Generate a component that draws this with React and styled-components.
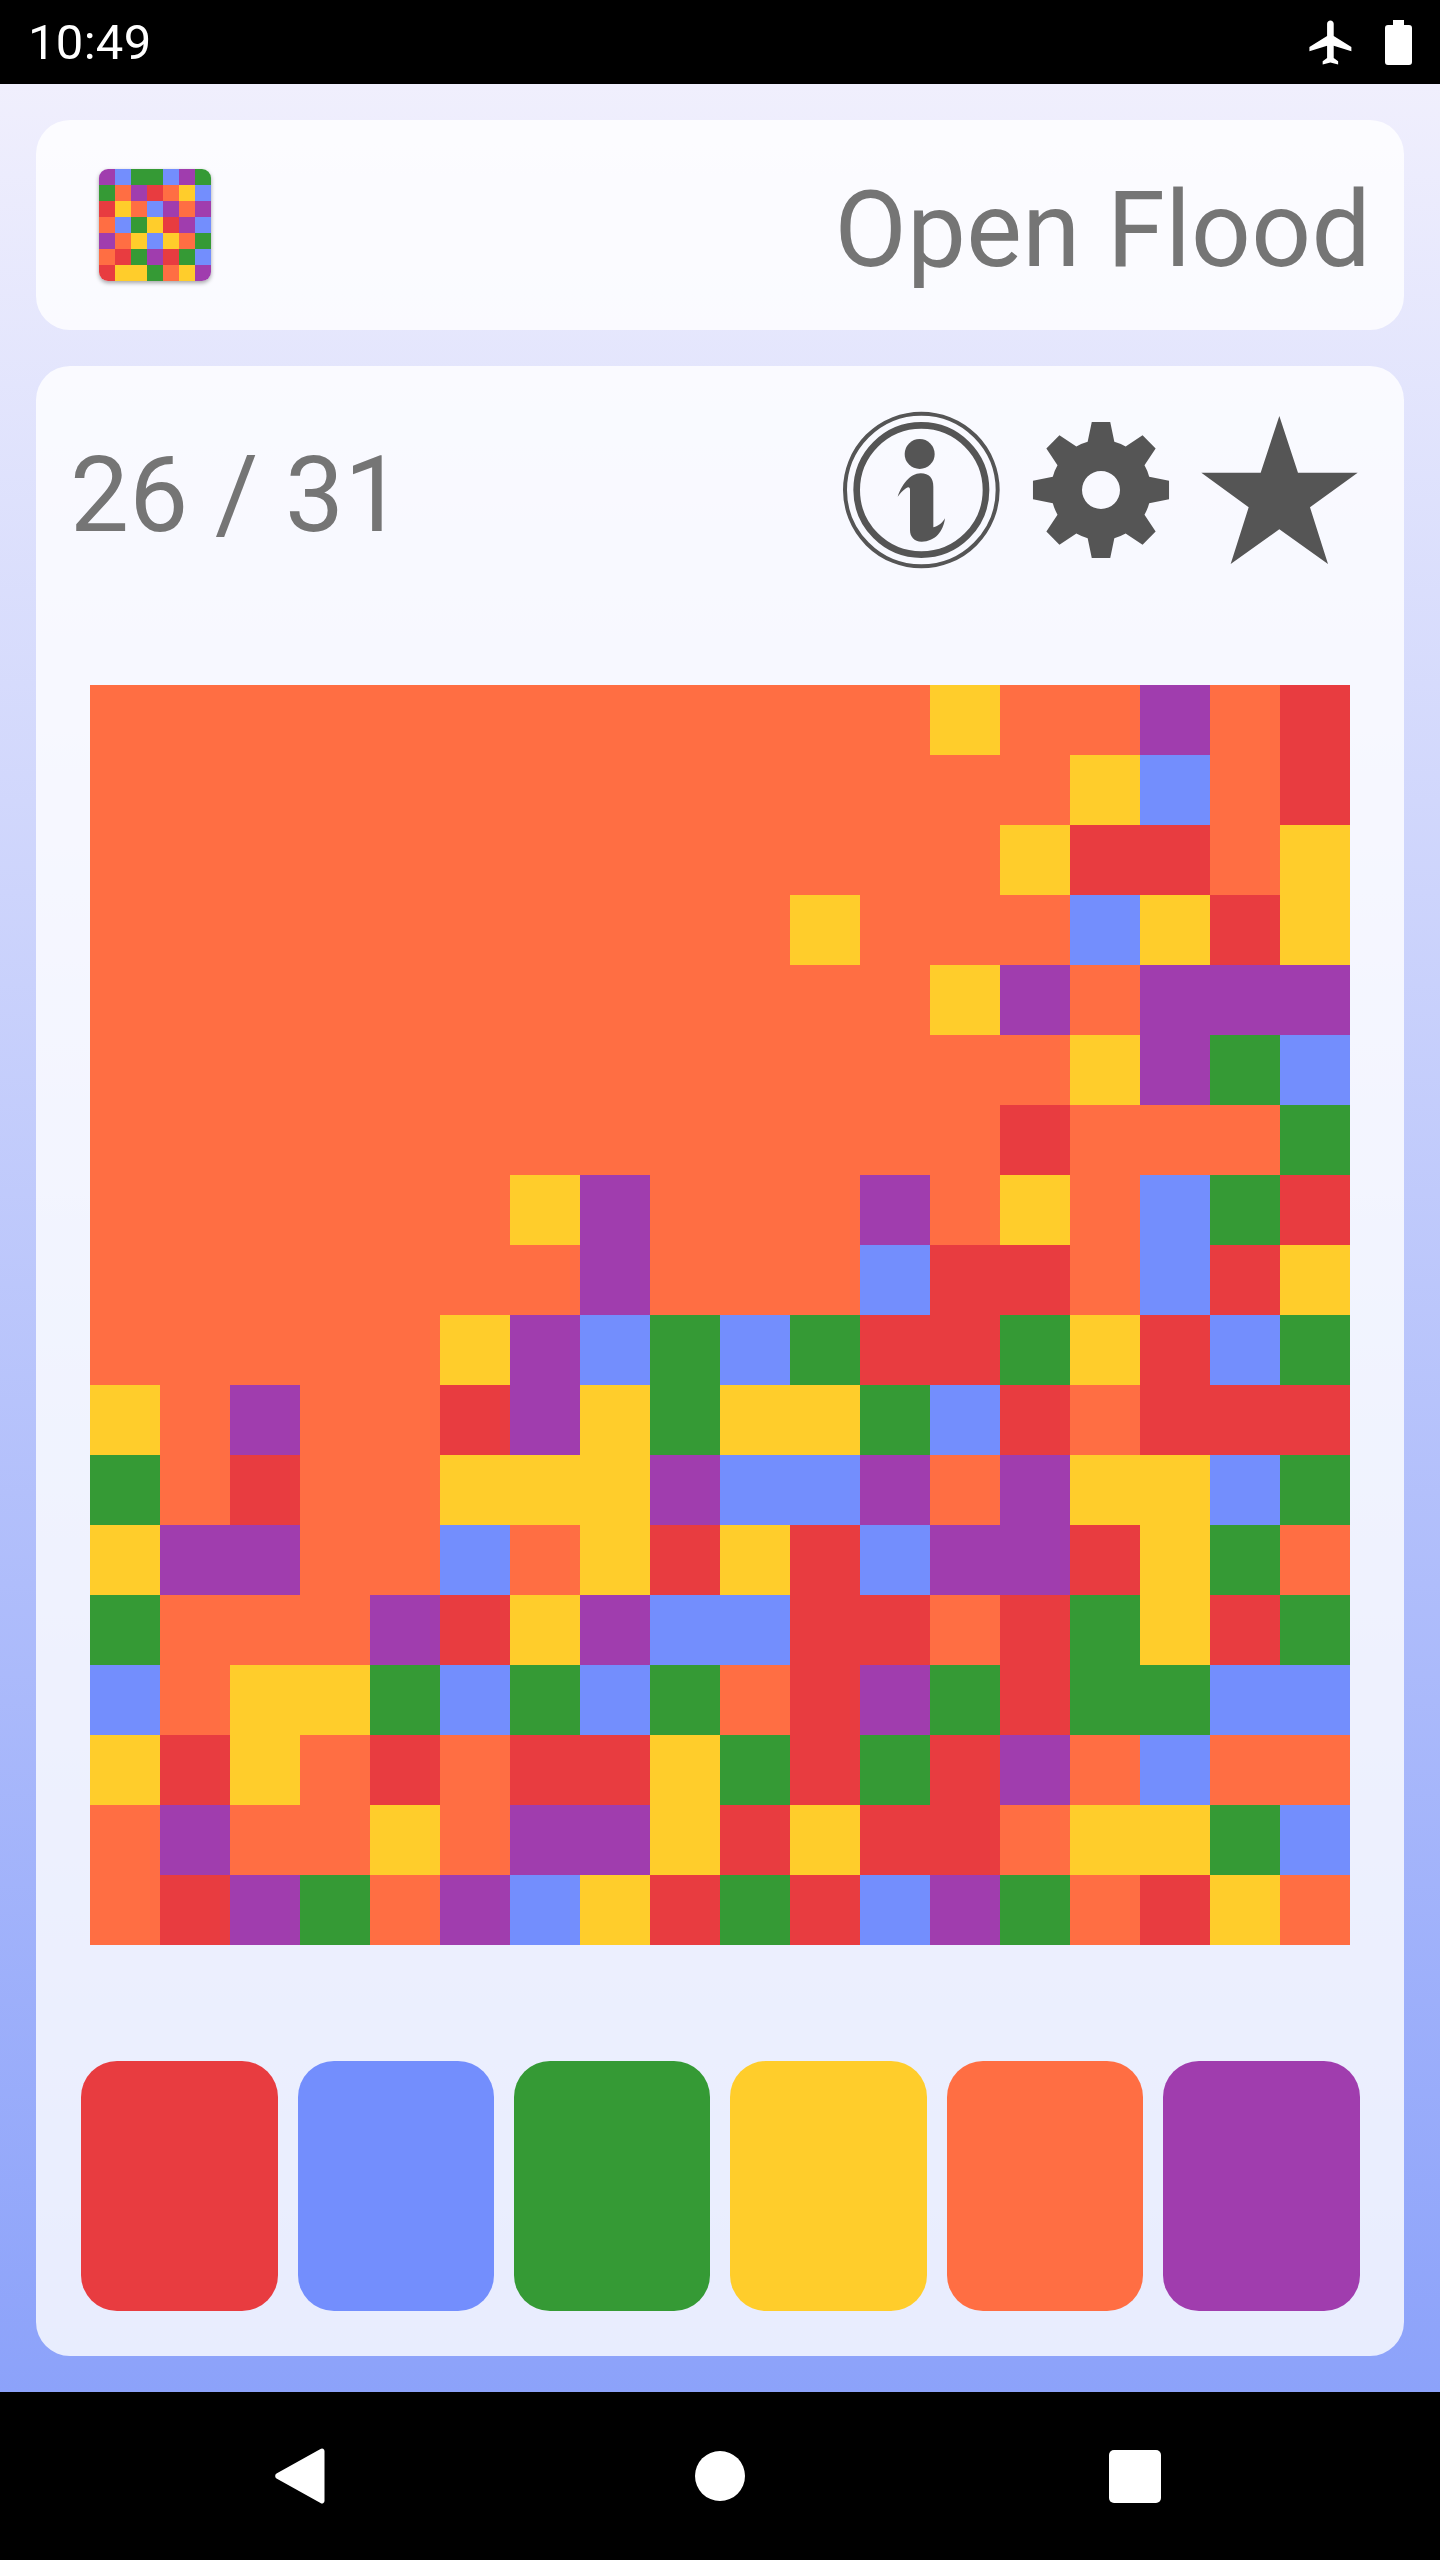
import React from 'react'
import styled, { createGlobalStyle } from 'styled-components'

const COLORS = {
  r: '#E83C40',
  b: '#738EFD',
  g: '#359A35',
  y: '#FFCD2B',
  o: '#FF6E43',
  p: '#A03DAE',
}

const BOARD = [
  'ooooooooooooyoopor',
  'ooooooooooooooybor',
  'oooooooooooooyrroy',
  'ooooooooooyooobyry',
  'ooooooooooooypoppp',
  'ooooooooooooooypgb',
  'ooooooooooooorooog',
  'ooooooypooopoyobgr',
  'ooooooopooobrrobry',
  'oooooypbgbgrrgyrbg',
  'yopoorpygyygbrorrr',
  'gorooyyypbbpopyybg',
  'yppooboyryrbpprygo',
  'gooopryp' + 'bbrrorgyrg',
  'boyygbgbgorpgrggbb',
  'yryororrygrgrpoboo',
  'opooyoppyryrroyygb',
  'orpgopbyrgrbpgoryo',
]

const LOGO = [
  'pbggbpg',
  'goproyb',
  'ryobpop',
  'obgyrpb',
  'poybyog',
  'orgprgb',
  'ryygoyp',
]

const BUTTONS = ['r', 'b', 'g', 'y', 'o', 'p']

const GlobalStyle = createGlobalStyle`
  html, body {
    margin: 0;
    padding: 0;
    background: #000;
    font-family: Roboto, "Liberation Sans", sans-serif;
  }
`

const Screen = styled.div`
  display: flex;
  flex-direction: column;
  width: 1440px;
  height: 2560px;
  overflow: hidden;
`

const StatusBar = styled.div`
  display: flex;
  flex: none;
  align-items: center;
  justify-content: space-between;
  height: 84px;
  padding: 0 28px;
  background: #000;
  color: #fff;
`

const Clock = styled.span`
  font-size: 49px;
  line-height: 1;
  letter-spacing: 0.3px;
`

const StatusIcons = styled.div`
  display: flex;
  align-items: center;
  gap: 27px;
`

const Main = styled.main`
  display: flex;
  flex: 1;
  flex-direction: column;
  gap: 36px;
  padding: 36px;
  background: linear-gradient(180deg, #f0effd 0%, #8ca2fa 100%);
`

const Card = styled.section`
  border-radius: 34px;
  background: rgba(255, 255, 255, 0.8);
`

const HeaderCard = styled(Card)`
  display: flex;
  flex: none;
  align-items: center;
  justify-content: space-between;
  height: 210px;
  padding: 0 33px 0 63px;
`

const LogoGrid = styled.div`
  display: grid;
  grid-template-columns: repeat(7, 16px);
  grid-auto-rows: 16px;
  overflow: hidden;
  border-radius: 9px;
  box-shadow: 0 2px 4px rgba(0, 0, 0, 0.35);
`

const Title = styled.h1`
  margin: 0;
  padding-top: 10px;
  color: #757575;
  font-size: 105px;
  font-weight: 400;
  line-height: 1;
  letter-spacing: 0.3px;
`

const GameCard = styled(Card)`
  display: flex;
  flex: 1;
  flex-direction: column;
  align-items: center;
  padding: 44px 36px 45px;
`

const TopRow = styled.div`
  display: flex;
  align-items: center;
  justify-content: space-between;
  width: 100%;
  height: 160px;
  padding-right: 8px;
  box-sizing: border-box;
`

const Score = styled.span`
  margin-left: -2px;
  padding-top: 10px;
  color: #757575;
  font-size: 105px;
  line-height: 1;
  letter-spacing: 0.3px;
`

const IconRow = styled.div`
  display: flex;
  gap: 19px;
`

const IconButton = styled.svg`
  display: block;
  width: 160px;
  height: 160px;
  fill: #555;
`

const Board = styled.div`
  display: grid;
  grid-template-columns: repeat(18, 70px);
  grid-auto-rows: 70px;
  margin-top: 115px;
`

const Tile = styled.div`
  background: ${(p) => p.$color};
`

const ColorButtons = styled.div`
  display: grid;
  grid-template-columns: repeat(6, 1fr);
  gap: 20px;
  width: 1278.4px;
  margin-top: 116px;
  margin-left: 1px;
`

const ColorButton = styled.button`
  height: 250px;
  padding: 0;
  border: 0;
  border-radius: 36px;
  background: ${(p) => p.$color};
`

const NavBar = styled.nav`
  display: grid;
  flex: none;
  grid-template-columns: 420px 420px 410px;
  align-items: center;
  justify-items: center;
  height: 168px;
  padding-left: 90px;
  background: #000;
`

const HomeKey = styled.div`
  width: 50px;
  height: 50px;
  border-radius: 50%;
  background: #fff;
`

const RecentsKey = styled.div`
  width: 52px;
  height: 53px;
  border-radius: 5px;
  background: #fff;
`

const gearPath = () => {
  const cx = 902
  const cy = 300
  const pt = (r, a) =>
    `${(cx + r * Math.sin(a)).toFixed(1)} ${(cy - r * Math.cos(a)).toFixed(1)}`
  let d = ''
  for (let i = 0; i < 8; i++) {
    const a = (i * Math.PI) / 4
    const prefix = i === 0 ? 'M' : 'A150 150 0 0 1'
    d += `${prefix} ${pt(150, a - 0.27)} `
    d += `L ${pt(206, a - 0.135)} L ${pt(206, a + 0.135)} L ${pt(150, a + 0.27)} `
  }
  d += `A150 150 0 0 1 ${pt(150, -0.27)} Z `
  d += `M ${cx - 57} ${cy} a57 57 0 1 0 114 0 a57 57 0 1 0 -114 0 Z`
  return d
}

const InfoIcon = () => (
  <IconButton viewBox="126 60 480 480">
    <circle cx="364" cy="300" r="229" fill="none" stroke="#555" strokeWidth="12" />
    <circle cx="364" cy="300" r="194" fill="none" stroke="#555" strokeWidth="20" />
    <circle cx="359" cy="192" r="45" />
    <path d="M293 320 C305 285 330 250 362 250 C388 250 400 265 400 290 L400 412 C415 408 428 398 435 385 C430 425 405 455 365 455 C342 455 330 440 330 420 L330 300 C330 290 325 290 318 295 C307 302 300 312 293 320 Z" />
  </IconButton>
)

const GearIcon = () => (
  <IconButton viewBox="662 60 480 480">
    <path fillRule="evenodd" d={gearPath()} />
  </IconButton>
)

const StarIcon = () => (
  <IconButton viewBox="60 60 480 480">
    <path d="M298 78 L354 248 L533 248 L390 352 L444 522 L298 418 L152 522 L206 352 L64 248 L242 248 Z" />
  </IconButton>
)

const App = () => (
  <Screen>
    <GlobalStyle />
    <StatusBar>
      <Clock>10:49</Clock>
      <StatusIcons>
        <svg width="53" height="53" viewBox="0 0 24 24" fill="#fff">
          <path d="M21 16v-2l-8-5V3.5c0-.83-.67-1.5-1.5-1.5S10 2.67 10 3.5V9l-8 5v2l8-2.5V19l-2 1.5V22l3.5-1 3.5 1v-1.5L13 19v-5.5l8 2.5z" />
        </svg>
        <svg width="27" height="45" viewBox="0 0 27 45" fill="#fff">
          <path d="M8 0h11v5h5a3 3 0 0 1 3 3v34a3 3 0 0 1-3 3H3a3 3 0 0 1-3-3V8a3 3 0 0 1 3-3h5z" />
        </svg>
      </StatusIcons>
    </StatusBar>
    <Main>
      <HeaderCard>
        <LogoGrid>
          {LOGO.join('').split('').map((c, i) => (
            <Tile key={i} $color={COLORS[c]} />
          ))}
        </LogoGrid>
        <Title>Open Flood</Title>
      </HeaderCard>
      <GameCard>
        <TopRow>
          <Score>26 / 31</Score>
          <IconRow>
            <InfoIcon />
            <GearIcon />
            <StarIcon />
          </IconRow>
        </TopRow>
        <Board>
          {BOARD.join('').split('').map((c, i) => (
            <Tile key={i} $color={COLORS[c]} />
          ))}
        </Board>
        <ColorButtons>
          {BUTTONS.map((c) => (
            <ColorButton key={c} $color={COLORS[c]} />
          ))}
        </ColorButtons>
      </GameCard>
    </Main>
    <NavBar>
      <svg width="50" height="56" viewBox="0 0 50 56" fill="#fff">
        <path d="M49.500 3v50a2.500 2.500 0 0 1-4 2L1.500 30.500a3 3 0 0 1 0-5L45.500 1a2.500 2.500 0 0 1 4 2z" />
      </svg>
      <HomeKey />
      <RecentsKey />
    </NavBar>
  </Screen>
)

export default App
